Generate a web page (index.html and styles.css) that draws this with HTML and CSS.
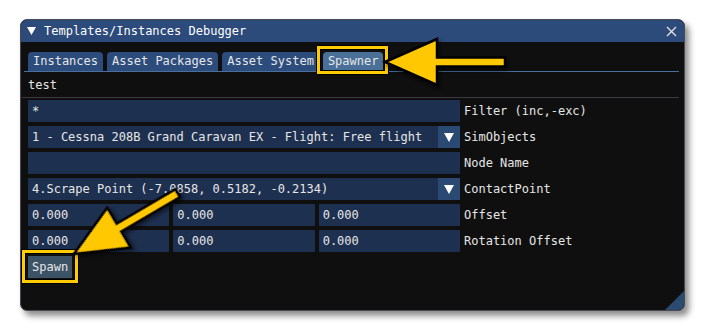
FILE: index.html
```html
<!DOCTYPE html>
<html lang="en">
<head>
    <title>Templates/Instances Debugger</title>
    <link rel="stylesheet" href="styles.css">
</head>
<body>
    <div class="window">
        <div class="title-bar">
            <svg class="collapse" width="9" height="8" viewBox="0 0 9 8"><polygon points="0,0 9,0 4.5,8" fill="#fff"/></svg>
            <span class="title">Templates/Instances Debugger</span>
            <svg class="close" width="11" height="11" viewBox="0 0 11 11"><path d="M1 1 L10 10 M10 1 L1 10" stroke="#e6e6e6" stroke-width="1.3"/></svg>
        </div>

        <div class="content">
            <div class="tab-bar">
                <span class="tab">Instances</span>
                <span class="tab">Asset Packages</span>
                <span class="tab">Asset System</span>
                <span class="tab active highlight">Spawner</span>
            </div>
            <div class="tab-line"></div>

            <div class="text-row">test</div>
            <div class="separator"></div>

            <div class="form">
                <div class="input">*</div>
                <div class="label">Filter (inc,-exc)</div>

                <div class="combo">
                    <span class="combo-value">1 - Cessna 208B Grand Caravan EX - Flight: Free flight</span>
                    <span class="combo-arrow"><svg width="10" height="9" viewBox="0 0 10 9"><polygon points="0,0 10,0 5,9" fill="#fff"/></svg></span>
                </div>
                <div class="label">SimObjects</div>

                <div class="input"></div>
                <div class="label">Node Name</div>

                <div class="combo">
                    <span class="combo-value">4.Scrape Point (-7.0858, 0.5182, -0.2134)</span>
                    <span class="combo-arrow"><svg width="10" height="9" viewBox="0 0 10 9"><polygon points="0,0 10,0 5,9" fill="#fff"/></svg></span>
                </div>
                <div class="label">ContactPoint</div>

                <div class="triple">
                    <div class="input">0.000</div>
                    <div class="input">0.000</div>
                    <div class="input">0.000</div>
                </div>
                <div class="label">Offset</div>

                <div class="triple">
                    <div class="input">0.000</div>
                    <div class="input">0.000</div>
                    <div class="input">0.000</div>
                </div>
                <div class="label">Rotation Offset</div>
            </div>

            <div class="button-row">
                <span class="button highlight">Spawn</span>
            </div>
        </div>

        <div class="resize-grip"></div>
    </div>

    <!-- Hinweispfeile über dem Fenster -->
    <svg class="arrows" width="706" height="332" viewBox="0 0 706 332">
        <defs>
            <filter id="shadow" x="-20%" y="-20%" width="140%" height="140%">
                <feDropShadow dx="2" dy="3" stdDeviation="2" flood-color="#000" flood-opacity="0.55"/>
            </filter>
            <polygon id="arrow" points="0,0 52,-23 52,-4.5 120,-4.5 120,4.5 52,4.5 52,23"/>
        </defs>
        <use href="#arrow" transform="translate(385,62)" class="arrow"/>
        <use href="#arrow" transform="translate(74,254) rotate(-30.4)" class="arrow"/>
    </svg>
</body>
</html>
```

FILE: styles.css
```css
body {
    margin: 0;
    padding: 19px 0 0 20px;
    background-color: #fff;
    font-family: "DejaVu Sans Mono", "Liberation Mono", monospace;
    font-size: 12px;
    color: #e6e6e6;
    width: 706px;
    height: 332px;
    box-sizing: border-box;
    overflow: hidden;
}

.window {
    position: relative;
    width: 665px;
    height: 292px;
    box-sizing: border-box;
    background-color: #0f0f0f;
    border: 1px solid #4a4a52;
    border-radius: 7px;
    overflow: hidden;
    box-shadow: 4px 5px 6px rgba(0, 0, 0, 0.45);
}

.title-bar {
    display: flex;
    align-items: center;
    height: 22px;
    background-color: #2c4a7a;
    padding: 0 6px;
}

.collapse {
    margin-right: 8px;
}

.title {
    color: #fff;
    flex: 1;
}

.close {
    margin-right: 1px;
}

.content {
    padding: 10px 7px 0 7px;
}

.tab-bar {
    display: flex;
    gap: 4px;
    height: 19px;
}

.tab {
    height: 19px;
    line-height: 19px;
    padding: 0 5px;
    background-color: #2c4c7c;
    border-radius: 4px 4px 0 0;
}

.tab.active {
    background-color: #4a7098;
}

.tab-line {
    height: 1px;
    margin: 0 -2px 0 -4px;
    background-color: #4a6f9c;
}

.text-row {
    padding-top: 5px;
    line-height: 16px;
    height: 16px;
}

.separator {
    height: 1px;
    margin: 4px -2px 2px -6px;
    background-color: #3a3a42;
}

.form {
    display: grid;
    grid-template-columns: 432px 1fr;
    grid-auto-rows: 22px;
    column-gap: 4px;
    row-gap: 4px;
}

.input {
    height: 22px;
    line-height: 22px;
    padding-left: 4px;
    background-color: #1e3050;
    white-space: nowrap;
    overflow: hidden;
}

.label {
    line-height: 22px;
    white-space: nowrap;
}

.combo {
    display: flex;
    height: 22px;
    background-color: #1e3050;
}

.combo-value {
    flex: 1;
    line-height: 22px;
    padding-left: 4px;
    white-space: nowrap;
    overflow: hidden;
}

.combo-arrow {
    display: flex;
    align-items: center;
    justify-content: center;
    width: 22px;
    background-color: #2b4a73;
}

.triple {
    display: grid;
    grid-template-columns: 1fr 1fr 1fr;
    gap: 4px;
}

.button-row {
    margin-top: 4px;
    display: flex;
}

.button {
    height: 22px;
    line-height: 22px;
    padding: 0 4px;
    background-color: #3c5366;
}

.highlight {
    position: relative;
}

.highlight::after {
    content: "";
    position: absolute;
    top: -6px;
    left: -6px;
    right: -6px;
    bottom: -5px;
    border: 3px solid #ffcc00;
    box-shadow: 0 0 0 1px #000, inset 0 0 0 1px #000;
}

.tab.highlight::after {
    right: -5px;
    bottom: -3px;
}

.resize-grip {
    position: absolute;
    right: 0;
    bottom: 0;
    width: 19px;
    height: 19px;
    background-color: #2a4a70;
    clip-path: polygon(100% 0, 100% 100%, 0 100%);
}

.arrows {
    position: absolute;
    top: 0;
    left: 0;
    pointer-events: none;
}

.arrow {
    fill: #ffc800;
    stroke: #000;
    stroke-width: 2.5;
    stroke-linejoin: miter;
    filter: url(#shadow);
}
```
